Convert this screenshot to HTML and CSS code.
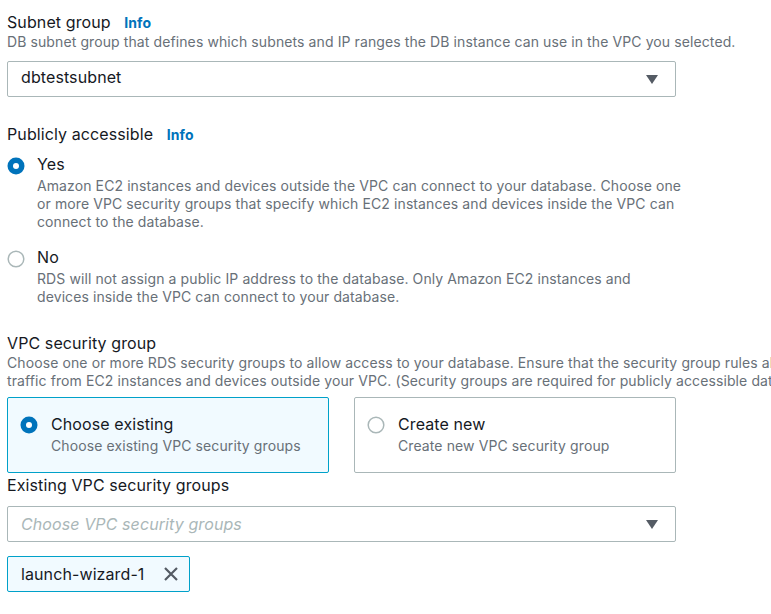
FILE: index.html
```html
<!DOCTYPE html>
<html lang="en">
<head>
<meta charset="utf-8">
<title>Connectivity</title>
<link rel="stylesheet" href="styles.css">
</head>
<body>
<div class="page">
  <section class="field">
    <div class="label">Subnet group <a class="info" href="#">Info</a></div>
    <div class="desc">DB subnet group that defines which subnets and IP ranges the DB instance can use in the VPC you selected.</div>
    <div class="select">
      <span class="value">dbtestsubnet</span>
      <svg class="caret" width="12" height="9" viewBox="0 0 12 9"><path d="M0 0H12L6 9Z" fill="#545b64"/></svg>
    </div>
  </section>

  <section class="field gap">
    <div class="label">Publicly accessible <a class="info" href="#">Info</a></div>
    <div class="radio-group">
      <div class="radio-row">
        <svg class="radio" width="18" height="18" viewBox="0 0 18 18"><circle cx="9" cy="9" r="8.5" fill="#0073bb"/><circle cx="9" cy="9" r="3" fill="#fff"/></svg>
        <div class="radio-text">
          <div class="radio-title">Yes</div>
          <div class="desc">Amazon EC2 instances and devices outside the VPC can connect to your database. Choose one or more VPC security groups that specify which EC2 instances and devices inside the VPC can connect to the database.</div>
        </div>
      </div>
      <div class="radio-row">
        <svg class="radio" width="18" height="18" viewBox="0 0 18 18"><circle cx="9" cy="9" r="7.8" fill="#fff" stroke="#aab7b8" stroke-width="1.5"/></svg>
        <div class="radio-text">
          <div class="radio-title">No</div>
          <div class="desc">RDS will not assign a public IP address to the database. Only Amazon EC2 instances and devices inside the VPC can connect to your database.</div>
        </div>
      </div>
    </div>
  </section>

  <section class="field gap">
    <div class="label">VPC security group</div>
    <div class="desc wide">Choose one or more RDS security groups to allow access to your database. Ensure that the security group rules allow appropriate incoming<br>traffic from EC2 instances and devices outside your VPC. (Security groups are required for publicly accessible databases.)</div>
    <div class="tiles">
      <div class="tile selected">
        <svg class="radio" width="18" height="18" viewBox="0 0 18 18"><circle cx="9" cy="9" r="8.5" fill="#0073bb"/><circle cx="9" cy="9" r="3" fill="#fff"/></svg>
        <div class="radio-text">
          <div class="radio-title">Choose existing</div>
          <div class="desc">Choose existing VPC security groups</div>
        </div>
      </div>
      <div class="tile">
        <svg class="radio" width="18" height="18" viewBox="0 0 18 18"><circle cx="9" cy="9" r="7.8" fill="#fff" stroke="#aab7b8" stroke-width="1.5"/></svg>
        <div class="radio-text">
          <div class="radio-title">Create new</div>
          <div class="desc">Create new VPC security group</div>
        </div>
      </div>
    </div>
  </section>

  <section class="field last">
    <div class="label">Existing VPC security groups</div>
    <div class="select">
      <span class="placeholder">Choose VPC security groups</span>
      <svg class="caret" width="12" height="9" viewBox="0 0 12 9"><path d="M0 0H12L6 9Z" fill="#545b64"/></svg>
    </div>
    <div class="tokens">
      <div class="token">
        <span>launch-wizard-1</span>
        <svg class="dismiss" width="16" height="16" viewBox="0 0 16 16"><path d="M2 2L14 14M14 2L2 14" stroke="#545b64" stroke-width="2.2" fill="none"/></svg>
      </div>
    </div>
  </section>
</div>
</body>
</html>
```
FILE: styles.css
```css
html, body {
  margin: 0;
  padding: 0;
  background: #ffffff;
  overflow: hidden;
}
body {
  font-family: Inter, "Noto Sans", sans-serif;
  color: #16191f;
  letter-spacing: 0.1px;
}
.page {
  width: 1100px;
  padding: 12px 0 0 7px;
}
.field {
  display: flex;
  flex-direction: column;
  align-items: flex-start;
}
.field.gap {
  margin-top: 27px;
}
.field.last {
  margin-top: 2px;
}
.label {
  font-size: 16px;
  line-height: 21px;
}
.info {
  font-size: 14px;
  font-weight: 700;
  color: #0073bb;
  text-decoration: none;
  margin-left: 9px;
}
.desc {
  font-size: 14px;
  line-height: 18px;
  color: #687078;
}
.desc.wide {
  white-space: nowrap;
}
.select {
  box-sizing: border-box;
  width: 669px;
  height: 36px;
  margin-top: 10px;
  border: 1px solid #aab7b8;
  border-radius: 2px;
  padding: 0 17px 0 13px;
  display: flex;
  align-items: center;
  justify-content: space-between;
  font-size: 16px;
}
.value {
  margin-bottom: 4px;
}
.placeholder {
  color: #aab7b8;
  font-style: italic;
}
.radio-group {
  display: flex;
  flex-direction: column;
  gap: 15px;
  margin-top: 8px;
}
.radio-row {
  display: flex;
  gap: 12px;
  width: 676px;
}
.radio {
  flex: none;
  margin-top: 4px;
}
.radio-title {
  font-size: 16px;
  line-height: 22px;
}
.radio-text .desc {
  margin-top: 2px;
}
.tiles {
  display: grid;
  grid-template-columns: 322px 322px;
  gap: 25px;
  margin-top: 7px;
}
.tile {
  box-sizing: border-box;
  height: 76px;
  border: 1px solid #aab7b8;
  border-radius: 2px;
  padding: 15px 12px 0;
  display: flex;
  gap: 13px;
  background: #fff;
}
.tile.selected {
  background: #f1faff;
  border-color: #00a1c9;
}
.tile .radio {
  margin-top: 3px;
}
.tokens {
  margin-top: 14px;
  display: flex;
}
.token {
  box-sizing: border-box;
  height: 36px;
  width: 183px;
  border: 1px solid #00a1c9;
  border-radius: 2px;
  background: #f1faff;
  padding: 0 10px 0 13px;
  display: flex;
  align-items: center;
  justify-content: space-between;
  font-size: 16px;
}
.dismiss {
  flex: none;
}
```
